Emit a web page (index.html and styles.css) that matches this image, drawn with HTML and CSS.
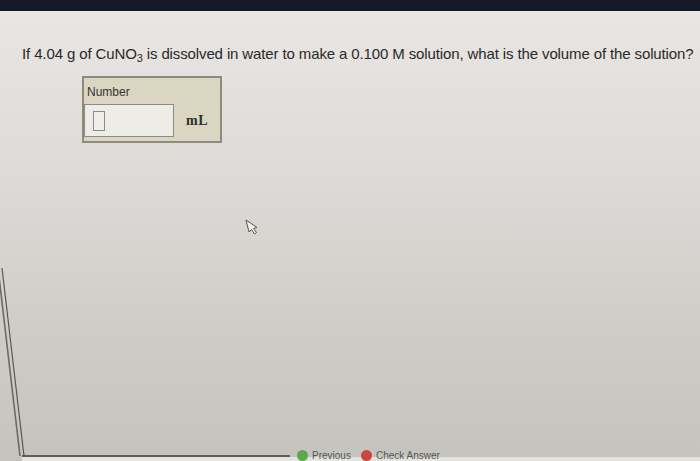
FILE: index.html
```html
<!DOCTYPE html>
<html>
<head>
<meta charset="utf-8">
<link rel="stylesheet" href="styles.css">
</head>
<body>
<div class="screen">
  <div class="topbar"></div>
  <div class="page">
    <p class="question">If 4.04 g of CuNO<sub>3</sub> is dissolved in water to make a 0.100 M solution, what is the volume of the solution?</p>
    <div class="answer-box">
      <div class="label">Number</div>
      <div class="row">
        <div class="input"><span class="caret"></span></div>
        <span class="unit">mL</span>
      </div>
    </div>
    <div class="footer">
      <div class="footer-line"></div>
      <div class="nav"><span class="dot green"></span><span class="nav-text">Previous</span></div>
      <div class="nav"><span class="dot red"></span><span class="nav-text">Check Answer</span></div>
    </div>
  </div>
  <svg class="frame" width="700" height="461" viewBox="0 0 700 461">
    <line x1="-2" y1="268" x2="20" y2="456" stroke="#6d6a60" stroke-width="1.6"/>
    <line x1="2" y1="268" x2="24" y2="456" stroke="#5a574e" stroke-width="1.2"/>
  </svg>
  <svg class="cursor" width="20" height="20" viewBox="0 0 20 20">
    <path d="M2 1 L5 13 L7.5 10.5 L10.5 15 L12.5 13.5 L9.5 9.5 L13 8.5 Z" fill="#f2f1ec" stroke="#55554f" stroke-width="1" stroke-linejoin="round"/>
  </svg>
</div>
</body>
</html>
```
FILE: styles.css
```css
html, body {
  margin: 0;
  padding: 0;
  width: 700px;
  height: 461px;
  overflow: hidden;
}
.screen {
  position: relative;
  width: 700px;
  height: 461px;
  display: flex;
  flex-direction: column;
  background: linear-gradient(180deg, #e9e6e3 0%, #dedcd8 35%, #cfcdc8 70%, #c4c3bd 100%);
  font-family: "Liberation Sans", Arial, sans-serif;
}
.topbar {
  height: 11px;
  background: #141a29;
  flex: none;
}
.page {
  flex: 1;
  display: flex;
  flex-direction: column;
  padding-left: 22px;
}
.question {
  margin: 34px 0 0 0;
  font-size: 15px;
  line-height: 18px;
  color: #2a2a2a;
  letter-spacing: -0.12px;
  white-space: nowrap;
}
.question sub {
  font-size: 11px;
  line-height: 0;
  vertical-align: -3px;
}
.answer-box {
  margin: 13px 0 0 60px;
  width: 136px;
  height: 63px;
  border: 2px solid #8e8b7d;
  background: #dad6c2;
  box-sizing: content-box;
}
.label {
  font-size: 12px;
  line-height: 14px;
  color: #34342f;
  margin: 7px 0 0 3px;
}
.row {
  display: flex;
  align-items: center;
  margin-top: 5px;
}
.input {
  width: 88px;
  height: 31px;
  border: 1px solid #8c8a82;
  background: #edece7;
  display: flex;
  align-items: center;
  box-sizing: content-box;
}
.caret {
  width: 10px;
  height: 18px;
  margin-left: 8px;
  border: 1px solid #8a8a86;
  background: #efeeea;
}
.unit {
  font-family: "Liberation Serif", "Times New Roman", serif;
  font-weight: bold;
  font-size: 14px;
  color: #2e2e2e;
  margin-left: 12px;
  letter-spacing: 0.5px;
}
.footer {
  margin-top: auto;
  height: 11px;
  display: flex;
  align-items: flex-end;
  background: linear-gradient(180deg, transparent 0, transparent 7px, #e4e3df 7px);
}
.footer-line {
  width: 268px;
  height: 2px;
  background: #5e5c56;
  align-self: flex-start;
  margin-top: 5px;
}
.nav {
  display: flex;
  align-items: center;
  height: 11px;
}
.footer-line + .nav {
  margin-left: 7px;
}
.nav + .nav {
  margin-left: 10px;
}
.dot {
  width: 11px;
  height: 11px;
  border-radius: 50%;
  display: inline-block;
}
.green { background: #5ea84a; }
.red { background: #c9473c; }
.nav-text {
  font-size: 10px;
  line-height: 11px;
  color: #555;
  margin-left: 4px;
}
.frame {
  position: absolute;
  left: 0;
  top: 0;
  pointer-events: none;
}
.cursor {
  position: absolute;
  left: 244px;
  top: 219px;
}
```
